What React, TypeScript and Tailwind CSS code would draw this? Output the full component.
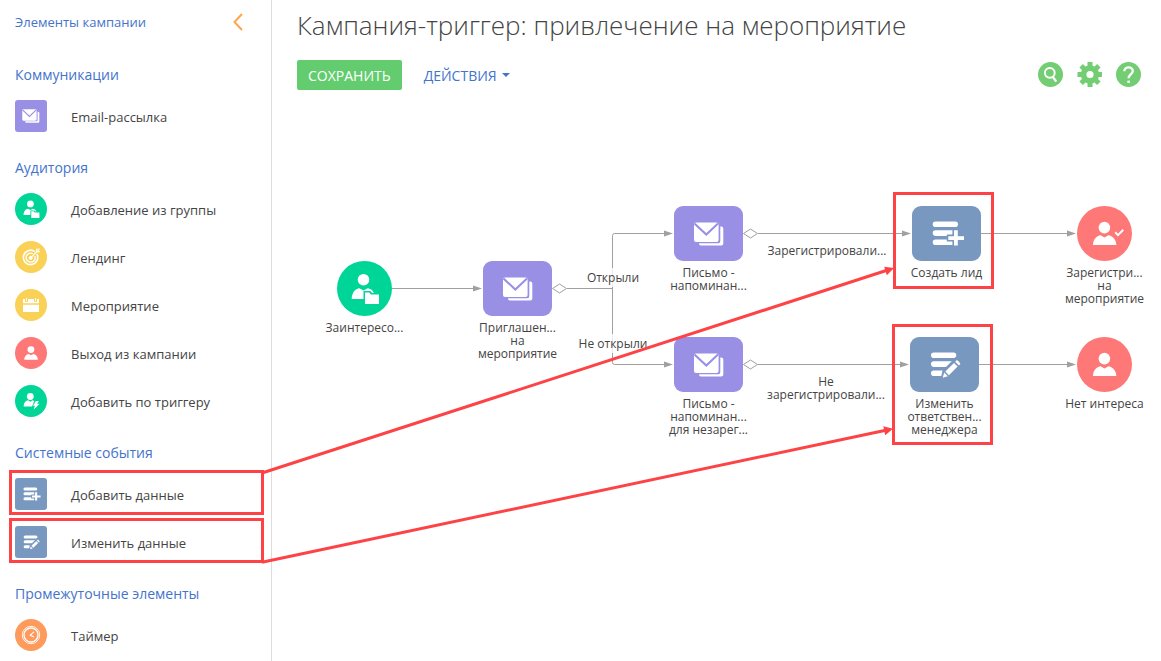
import type { ReactNode } from "react";

type IconProps = { className: string };

function MailIcon({ className }: IconProps) {
  return (
    <svg viewBox="0 0 30 24" className={className} aria-hidden="true">
      <path d="M2 0.5h20.600a2 2 0 0 1 2 2v15.500a2 2 0 0 1-2 2H2a2 2 0 0 1-2-2V2.500a2 2 0 0 1 2-2z" fill="#fff" />
      <path d="M0.500 1.500 12.300 12.600 24 1.500" fill="none" stroke="#998fe4" strokeWidth="2" />
      <path d="M26.300 4.600h1a2 2 0 0 1 2 2V21.400a2 2 0 0 1-2 2H7a2 2 0 0 1-2-2v-.2h19.300a2 2 0 0 0 2-2z" fill="#fff" />
    </svg>
  );
}

function GroupIcon({ className }: IconProps) {
  return (
    <svg viewBox="0 0 55 55" className={className} aria-hidden="true">
      <circle cx="26.500" cy="18.700" r="5.800" fill="#fff" />
      <path d="M14.700 38c0-6.500 4-10.500 7.600-10.800l4.200 2.200 4.200-2.200c2.500.2 5 1.800 6.200 4.800L28 38z" fill="#fff" />
      <path d="M26.500 39V30h7l1.500 2h9v13H26.500z" fill="#00d598" />
      <path d="M28 31.400h4.300l1.500 2.200H42V43H28z" fill="#fff" />
    </svg>
  );
}

function ExitIcon({ className }: IconProps) {
  return (
    <svg viewBox="0 0 55 55" className={className} aria-hidden="true">
      <circle cx="27.400" cy="21.600" r="5.800" fill="#fff" />
      <path d="M16 39c0-5.500 3.800-9.500 7.600-9.800l3.900 2.200 3.900-2.200c3.800.3 7.900 4.300 7.900 9.800z" fill="#fff" />
    </svg>
  );
}

function ExitCheckIcon({ className }: IconProps) {
  return (
    <svg viewBox="0 0 55 55" className={className} aria-hidden="true">
      <circle cx="27.400" cy="21.600" r="5.800" fill="#fff" />
      <path d="M16 39c0-5.500 3.800-9.500 7.600-9.800l3.900 2.200 3.900-2.200c3.800.3 7.900 4.300 7.900 9.800z" fill="#fff" />
      <path d="M38.200 26.300 41 29.100 46.300 23.800" fill="none" stroke="#fff" strokeWidth="2" />
    </svg>
  );
}

function TriggerIcon({ className }: IconProps) {
  return (
    <svg viewBox="0 0 32 32" className={className} aria-hidden="true">
      <circle cx="15.300" cy="11.500" r="3.400" fill="#fff" />
      <path d="M8.700 21.500c0-3.500 2-6 4.400-6.200l2.200 1.400 2.200-1.400 1.800.6-2.300 5.600z" fill="#fff" />
      <path d="M20.900 16h3l-1.800 2.700h2.500l-6 6 1.300-3.900h-1.900z" fill="#fff" />
    </svg>
  );
}

function TargetIcon({ className }: IconProps) {
  return (
    <svg viewBox="0 0 32 32" className={className} fill="none" stroke="#fff" aria-hidden="true">
      <path d="M19.800 10.600A7.200 7.200 0 1 0 21.900 13" strokeWidth="1.600" />
      <path d="M17.800 12.700A4.500 4.500 0 1 0 19.800 15" strokeWidth="1.400" />
      <circle cx="15.700" cy="16.900" r="1.600" fill="#fff" strokeWidth="0.800" />
      <path d="M15.700 16.900 22.300 10.200M21.800 10.600V7.600M21.800 10.600h3M22.800 9.600l1.700-1.900" strokeWidth="1.200" />
    </svg>
  );
}

function CalendarIcon({ className }: IconProps) {
  return (
    <svg viewBox="0 0 32 32" className={className} aria-hidden="true">
      <path d="M8 10h2v2.700h3V10h6v2.700h3V10h2v4.300H8zM8 15.700h16V23H8z" fill="#fff" />
      <path d="M11 9h1v2.700h-1zM20 9h1v2.700h-1z" fill="#fff" />
    </svg>
  );
}

function TimerIcon({ className }: IconProps) {
  return (
    <svg viewBox="0 0 32 32" className={className} fill="none" stroke="#fff" aria-hidden="true">
      <circle cx="16" cy="16" r="8.700" strokeWidth="0.900" />
      <circle cx="16" cy="16" r="7" strokeWidth="1.300" />
      <path d="M19 12.800 15.200 16.200 18.900 18" strokeWidth="1.100" />
    </svg>
  );
}

function AddDataIcon({ className }: IconProps) {
  return (
    <svg viewBox="0 0 69 55" className={className} aria-hidden="true">
      <path d="M23.500 18.200h19.700M23.500 27.100h19.700M23.500 36.200h16" stroke="#fff" strokeWidth="5.600" strokeLinecap="round" />
      <path d="M43.900 22.500v18.500M34.800 32.100H53.500" stroke="#7998c0" strokeWidth="7" />
      <path d="M43.900 24.200v15.300M36.300 32.100H52" stroke="#fff" strokeWidth="3.800" />
    </svg>
  );
}

function EditDataIcon({ className }: IconProps) {
  return (
    <svg viewBox="0 0 69 55" className={className} aria-hidden="true">
      <path d="M23.800 18.200h19.700M23.800 27.100h19.700M23.800 36.200h12" stroke="#fff" strokeWidth="5.600" strokeLinecap="round" />
      <path d="M30.500 42.800 32.500 33.500 46 20 53 27 39.500 41z" fill="#7998c0" />
      <path d="M32.700 40.800 34.200 35.600 37.800 39.300z" fill="#fff" />
      <path d="M35.300 34.600 44 25.900 47.600 29.500 38.900 38.200zM45.200 24.700 46.300 23.600a1 1 0 0 1 1.400 0L50 25.900a1 1 0 0 1 0 1.400L48.900 28.400z" fill="#fff" />
    </svg>
  );
}

function SidebarItem({ badge, icon, label, marked }: { badge: string; icon: ReactNode; label: string; marked?: boolean }) {
  return (
    <li className="relative">
      <button type="button" className="flex w-full items-center gap-6 text-left text-[13px] leading-[18px] text-[#444]">
        <span className={`flex size-8 shrink-0 items-center justify-center ${badge}`}>{icon}</span>
        <span className="pt-px">{label}</span>
      </button>
      {marked && <span className="pointer-events-none absolute -inset-x-[6px] -top-2 h-[45px] border-3 border-[#fd4345]" />}
    </li>
  );
}

function SidebarSection({ title, children }: { title: string; children: ReactNode }) {
  return (
    <section className="flex flex-col gap-4">
      <h2 className="text-[14px] leading-[18px] text-[#4473cc]">{title}</h2>
      <ul className="flex flex-col gap-4">{children}</ul>
    </section>
  );
}

function Sidebar() {
  return (
    <aside className="w-[272px] shrink-0 border-r border-[#dcdcdc] pt-[13px] pr-[13px] pl-[15px]">
      <div className="flex items-center justify-between pr-[15px]">
        <h2 className="text-[13px] leading-[18px] text-[#4473cc]">Элементы кампании</h2>
        <button type="button" aria-label="Свернуть панель" className="flex">
          <svg viewBox="0 0 10 18" className="h-[18px] w-[10px]" fill="none" stroke="#ffa54a" strokeWidth="2" aria-hidden="true">
            <path d="M9 1 1.500 9 9 17" />
          </svg>
        </button>
      </div>
      <div className="mt-[35px] flex flex-col gap-[27px]">
        <SidebarSection title="Коммуникации">
          <SidebarItem badge="rounded-[3px] bg-[#998fe4]" icon={<MailIcon className="h-[14px] w-[18px]" />} label="Email-рассылка" />
        </SidebarSection>
        <SidebarSection title="Аудитория">
          <SidebarItem badge="rounded-full bg-[#00d598]" icon={<GroupIcon className="size-8" />} label="Добавление из группы" />
          <SidebarItem badge="rounded-full bg-[#fad157]" icon={<TargetIcon className="size-8" />} label="Лендинг" />
          <SidebarItem badge="rounded-full bg-[#fad157]" icon={<CalendarIcon className="size-8" />} label="Мероприятие" />
          <SidebarItem badge="rounded-full bg-[#ff7878]" icon={<ExitIcon className="size-8" />} label="Выход из кампании" />
          <SidebarItem badge="rounded-full bg-[#00d598]" icon={<TriggerIcon className="size-8" />} label="Добавить по триггеру" />
        </SidebarSection>
        <SidebarSection title="Системные события">
          <SidebarItem marked badge="rounded-[3px] bg-[#7998c0]" icon={<AddDataIcon className="h-[30px] w-[38px] shrink-0" />} label="Добавить данные" />
          <SidebarItem marked badge="rounded-[3px] bg-[#7998c0]" icon={<EditDataIcon className="h-[30px] w-[38px] shrink-0" />} label="Изменить данные" />
        </SidebarSection>
        <SidebarSection title="Промежуточные элементы">
          <SidebarItem badge="rounded-full bg-[#ff9a5d]" icon={<TimerIcon className="size-8" />} label="Таймер" />
        </SidebarSection>
      </div>
    </aside>
  );
}

function Toolbar() {
  return (
    <header className="pt-2 pr-5 pl-[25px]">
      <h1 className="text-[26px] leading-[34px] font-light text-[#444]">Кампания-триггер: привлечение на мероприятие</h1>
      <div className="mt-[18px] flex items-center">
        <button type="button" className="h-[30px] rounded-[2px] bg-[#62cc6f] px-[11px] text-[14px] text-white">СОХРАНИТЬ</button>
        <button type="button" className="ml-[22px] flex items-center gap-[5px] text-[14px] text-[#4473cc]">
          ДЕЙСТВИЯ
          <svg viewBox="0 0 8 4" className="h-1 w-2" aria-hidden="true">
            <path d="M0 0h8L4 4z" fill="#4473cc" />
          </svg>
        </button>
        <div className="ml-auto flex gap-[13px]">
          <button type="button" aria-label="Поиск">
            <svg viewBox="0 0 26 26" className="size-[26px]" aria-hidden="true">
              <circle cx="13.500" cy="12.500" r="12.500" fill="#73cd72" />
              <circle cx="12.800" cy="10.800" r="4.900" fill="none" stroke="#fff" strokeWidth="2" />
              <path d="M15.600 14.600 19.300 19.600" stroke="#fff" strokeWidth="2.400" />
            </svg>
          </button>
          <button type="button" aria-label="Настройки">
            <svg viewBox="-14 -12.500 26 26" className="size-[26px]" aria-hidden="true">
              <g fill="#73cd72">
                <path d="M-2.500-12.500h5v25h-5z" />
                <path d="M-2.500-12.500h5v25h-5z" transform="rotate(45)" />
                <path d="M-2.500-12.500h5v25h-5z" transform="rotate(90)" />
                <path d="M-2.500-12.500h5v25h-5z" transform="rotate(135)" />
                <circle r="9.200" />
              </g>
              <circle r="3.600" fill="#fff" />
            </svg>
          </button>
          <button type="button" aria-label="Справка">
            <svg viewBox="0 0 26 26" className="size-[26px]" aria-hidden="true">
              <circle cx="13.500" cy="12.500" r="12.500" fill="#73cd72" />
              <path d="M9.300 9.200C9.300 4.100 17.800 4.200 17.800 9.100 17.800 12.100 13.600 12.300 13.600 16.300" fill="none" stroke="#fff" strokeWidth="2.300" />
              <path d="M12.400 18.600h2.500v2.400h-2.500z" fill="#fff" />
            </svg>
          </button>
        </div>
      </div>
    </header>
  );
}

function FlowNode({ place, shape, icon, label }: { place: string; shape: string; icon: ReactNode; label: string }) {
  return (
    <div className={`absolute flex w-[89px] flex-col items-center gap-[5px] ${place}`}>
      <div className={`flex h-[55px] items-center justify-center ${shape}`}>{icon}</div>
      <p className="text-center text-[12px] leading-[13px] whitespace-pre text-[#444]">{label}</p>
    </div>
  );
}

function FlowLabel({ place, label }: { place: string; label: string }) {
  return (
    <p className={`absolute -translate-x-1/2 bg-white/80 py-[3px] text-center text-[12px] leading-[13px] whitespace-pre text-[#444] ${place}`}>
      {label}
    </p>
  );
}

const connectors = [
  "M120 188.500H202",
  "M295 188.500H340.500",
  "M393 133.500H342.500Q340.500 133.500 340.500 135.500V262.500Q340.500 264.500 342.500 264.500H393",
  "M486 133.500H631",
  "M486 264.500H629",
  "M709 133.500H796",
  "M707 264.500H796",
];

const arrowTips = [
  [210, 188.5],
  [401, 133.5],
  [401, 264.5],
  [639, 133.5],
  [637, 264.5],
  [804, 133.5],
  [804, 264.5],
];

const gateways = [
  [280, 188.5],
  [471, 133.5],
  [471, 264.5],
];

function FlowCanvas() {
  const mail = <MailIcon className="h-6 w-[30px]" />;
  const mailShape = "w-[69px] rounded-[9px] bg-[#998fe4] pl-px";
  const dataShape = "w-[69px] rounded-[9px] bg-[#7998c0]";
  return (
    <div className="relative mt-[10px] grow">
      <svg className="absolute inset-0 size-full overflow-visible" fill="none" aria-hidden="true">
        {connectors.map((d) => (
          <path key={d} d={d} stroke="#a0a0a0" />
        ))}
        {arrowTips.map(([x, y]) => (
          <path key={`${x}-${y}`} d={`M${x} ${y}l-9-3v6z`} fill="#a0a0a0" />
        ))}
        {gateways.map(([x, y]) => (
          <path key={`${x}-${y}`} d={`M${x + 0.5} ${y}l7-4.500 7 4.500-7 4.500z`} fill="#fff" stroke="#a0a0a0" />
        ))}
      </svg>

      <FlowNode place="top-[161px] left-[48px]" shape="w-[55px] rounded-full bg-[#00d598]" icon={<GroupIcon className="size-[55px]" />} label="Заинтересо..." />
      <FlowNode place="top-[161px] left-[201px]" shape={mailShape} icon={mail} label={"Приглашен...\nна\nмероприятие"} />
      <FlowNode place="top-[106px] left-[392px]" shape={mailShape} icon={mail} label={"Письмо -\nнапоминан..."} />
      <FlowNode place="top-[237px] left-[392px]" shape={mailShape} icon={mail} label={"Письмо -\nнапоминан...\nдля незарег..."} />
      <FlowNode place="top-[106px] left-[630px]" shape={dataShape} icon={<AddDataIcon className="h-[55px] w-[69px]" />} label="Создать лид" />
      <FlowNode place="top-[237px] left-[628px]" shape={dataShape} icon={<EditDataIcon className="h-[55px] w-[69px]" />} label={"Изменить\nответствен...\nменеджера"} />
      <FlowNode place="top-[106px] left-[788px]" shape="w-[55px] rounded-full bg-[#ff7878]" icon={<ExitCheckIcon className="size-[55px]" />} label={"Зарегистри...\nна\nмероприятие"} />
      <FlowNode place="top-[237px] left-[788px]" shape="w-[55px] rounded-full bg-[#ff7878]" icon={<ExitIcon className="size-[55px]" />} label="Нет интереса" />

      <FlowLabel place="top-[168px] left-[341px]" label="Открыли" />
      <FlowLabel place="top-[234px] left-[341px]" label="Не открыли" />
      <FlowLabel place="top-[141px] left-[555px]" label="Зарегистрировали..." />
      <FlowLabel place="top-[272px] left-[554px]" label={"Не\nзарегистрировали..."} />

      <span className="pointer-events-none absolute top-[92px] left-[621px] h-[97px] w-[101px] border-3 border-[#fd4345]" />
      <span className="pointer-events-none absolute top-[224px] left-[620px] h-[121px] w-[101px] border-3 border-[#fd4345]" />
    </div>
  );
}

function CalloutArrows() {
  return (
    <svg className="pointer-events-none absolute top-0 left-0 size-full overflow-visible" aria-hidden="true">
      <path d="M262 473 887 270.300M262 562.300 887 430" fill="none" stroke="#fd4345" strokeWidth="3" />
      <path d="M894 268 884.200 266.800 886.800 275.200zM893 428.800 883.300 426.300 885.200 435.300z" fill="#fd4345" />
    </svg>
  );
}

export default function App() {
  return (
    <div className="relative flex min-h-screen overflow-hidden bg-white font-['Open_Sans','Noto_Sans',sans-serif]">
      <Sidebar />
      <main className="flex min-w-0 grow flex-col">
        <Toolbar />
        <FlowCanvas />
      </main>
      <CalloutArrows />
    </div>
  );
}
